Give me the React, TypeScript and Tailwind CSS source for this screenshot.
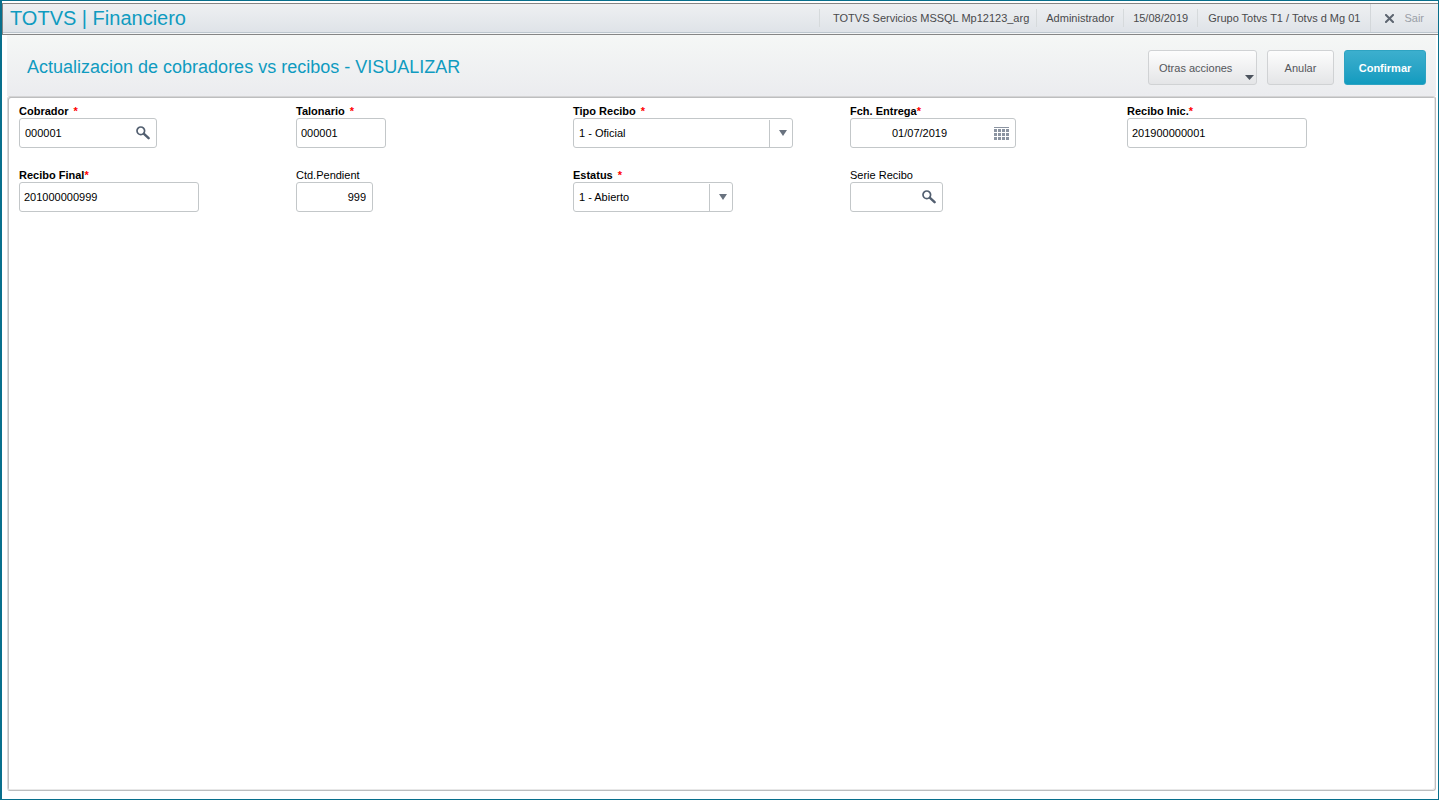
import React from "react"

type FieldProps = {
  id: string
  label: string
  required?: boolean
  // some labels carry the mark right after the text
  tight?: boolean
  children: React.ReactNode
}

const Field = ({ id, label, required, tight, children }: FieldProps) => {
  return (
    <div className="flex flex-col items-start">
      <label
        htmlFor={id}
        className={`block h-[14px] leading-[14px] ${required ? "font-bold" : ""}`}
      >
        {label}
        {required && (
          <span className={`text-[#ff0000] ${tight ? "" : "ml-[5px]"}`}>*</span>
        )}
      </label>
      {children}
    </div>
  )
}

const box =
  "flex h-[30px] max-w-full items-center rounded-[3px] border border-[#c3c7c9] bg-white"

type TextFieldProps = Omit<FieldProps, "children"> & {
  value: string
  width: string
  inputClass?: string
  action?: React.ReactNode
}

const TextField = ({
  value,
  width,
  inputClass = "px-1",
  action,
  ...field
}: TextFieldProps) => {
  return (
    <Field {...field}>
      <div className={`${box} ${width}`}>
        <input
          id={field.id}
          type="text"
          defaultValue={value}
          className={`h-full min-w-0 flex-1 bg-transparent outline-none ${inputClass}`}
        />
        {action}
      </div>
    </Field>
  )
}

type SelectFieldProps = Omit<FieldProps, "children"> & {
  value: string
  width: string
}

const SelectField = ({ value, width, ...field }: SelectFieldProps) => {
  return (
    <Field {...field}>
      <div className={`${box} relative ${width}`}>
        <select
          id={field.id}
          defaultValue={value}
          className="h-full w-full appearance-none bg-transparent pr-6 pl-[5px] outline-none"
        >
          <option>{value}</option>
        </select>
        <span className="pointer-events-none absolute inset-y-0 right-0 flex w-[23px] items-center justify-center pr-px">
          <span className="absolute top-px bottom-0 left-0 w-px bg-[#c3c7c9]" />
          <svg width="8" height="6" viewBox="0 0 8 6" className="ml-[5px]">
            <path d="M0 0h8L4 6z" fill="#69727f" />
          </svg>
        </span>
      </div>
    </Field>
  )
}

const SearchButton = ({ label }: { label: string }) => {
  return (
    <button type="button" aria-label={label} className="mr-[6px] shrink-0">
      <svg width="14" height="14" viewBox="0 0 14 14" fill="none">
        <circle cx="4.800" cy="4.800" r="3.800" stroke="#525f70" strokeWidth="1.700" />
        <path
          d="M8 7.800l4.600 4.400"
          stroke="#525f70"
          strokeWidth="2.4"
          strokeLinecap="round"
        />
      </svg>
    </button>
  )
}

const CalendarButton = () => {
  return (
    <button type="button" aria-label="Calendario" className="mr-[6px] shrink-0">
      <svg width="15" height="13" viewBox="0 0 15 13" fill="#8b94a1">
        <rect width="15" height="1" />
        {[2, 6, 10].map((y) =>
          [0, 4, 8, 12].map((x) => (
            <rect key={`${x}-${y}`} x={x} y={y} width="3" height="3" />
          ))
        )}
      </svg>
    </button>
  )
}

const TopBar = () => {
  return (
    <header className="mt-[2px] flex h-8 items-stretch border border-r-0 border-[#858585] bg-[#f4f6f7] pb-px">
      <div className="flex flex-1 items-center justify-between border-b border-[#bcc6ce] bg-linear-to-b from-[#eef0f2] to-[#dfe3e8]">
        <p className="pl-[7px] text-[20px] leading-7 whitespace-nowrap text-[#0f9bc0]">
          TOTVS | Financiero
        </p>
        <div className="flex h-full items-center whitespace-nowrap text-[#4a4a4c]">
          <span className="flex h-[18px] items-center border-l border-[#d6dadc] pr-[7px] pl-[13px]">
            TOTVS Servicios MSSQL Mp12123_arg
          </span>
          <span className="flex h-[18px] items-center border-l border-[#d6dadc] px-[9px]">
            Administrador
          </span>
          <span className="flex h-[18px] items-center border-l border-[#d6dadc] px-[9px]">
            15/08/2019
          </span>
          <span className="flex h-[18px] items-center border-l border-[#d6dadc] px-[10px]">
            Grupo Totvs T1 / Totvs d Mg 01
          </span>
          <button
            type="button"
            className="flex h-full items-center gap-[10px] border-l border-[#d3d7da] px-[14px] text-[#9a9fa7]"
          >
            <svg width="9" height="9" viewBox="0 0 9 9" aria-hidden="true">
              <path
                d="M1 1l7 7M8 1L1 8"
                stroke="#5d6570"
                strokeWidth="2"
                strokeLinecap="square"
              />
            </svg>
            Sair
          </button>
        </div>
      </div>
    </header>
  )
}

const lightButton =
  "h-[35px] rounded-[3px] border border-[#d0d2d4] bg-linear-to-b from-[#fdfdfd] to-[#e4e5e7] pt-[2px] text-[#54565b]"

const TitleBar = () => {
  return (
    <div className="flex h-[61px] items-center justify-between bg-linear-to-b from-[#f5f7f6] to-[#ebecef] pt-1 pr-[10px] pl-5">
      <h1 className="text-[18px] leading-[25px] text-[#0f9bc0]">
        Actualizacion de cobradores vs recibos - VISUALIZAR
      </h1>
      <div className="flex gap-[10px]">
        <button
          type="button"
          className={`${lightButton} relative w-[109px] pl-[10px] text-left`}
        >
          Otras acciones
          <svg
            width="9"
            height="5"
            viewBox="0 0 9 5"
            className="absolute right-[2px] bottom-1"
          >
            <path d="M0 0h9L4.500 5z" fill="#4c535d" />
          </svg>
        </button>
        <button type="button" className={`${lightButton} w-[67px]`}>
          Anular
        </button>
        <button
          type="button"
          className="h-[35px] w-[82px] rounded-[3px] border border-[#2ea3c2] bg-linear-to-b from-[#3cafce] to-[#109bbf] pt-[2px] font-bold text-white"
        >
          Confirmar
        </button>
      </div>
    </div>
  )
}

const App = () => {
  return (
    <div className="flex min-h-screen flex-col border border-l-2 border-[#086f8c] bg-white font-['Liberation_Sans',Arial,sans-serif] text-[11px] text-black">
      <TopBar />
      <main className="mr-[2px] mb-2 ml-[5px] flex flex-1 flex-col">
        <TitleBar />
        <form className="grid flex-1 grid-cols-5 content-start gap-y-5 rounded-[3px] border border-t-[#d4d4d5] border-r-[#bdbebf] border-b-[#bdbebf] border-l-[#d9dadb] pt-[7px] pr-[31px] pl-[11px] shadow-[inset_1px_1px_0_#bdbebf,inset_-1px_-1px_0_#e8e8e8]">
          <TextField
            id="cobrador"
            label="Cobrador"
            required
            value="000001"
            width="w-[138px]"
            inputClass="px-[5px]"
            action={<SearchButton label="Buscar cobrador" />}
          />
          <TextField
            id="talonario"
            label="Talonario"
            required
            value="000001"
            width="w-[90px]"
          />
          <SelectField
            id="tipo"
            label="Tipo Recibo"
            required
            value="1 - Oficial"
            width="w-[220px]"
          />
          <TextField
            id="entrega"
            label="Fch. Entrega"
            required
            tight
            value="01/07/2019"
            width="w-[166px]"
            inputClass="pr-[6px] text-center"
            action={<CalendarButton />}
          />
          <TextField
            id="recibo-inicial"
            label="Recibo Inic."
            required
            tight
            value="201900000001"
            width="w-[180px]"
          />
          <TextField
            id="recibo-final"
            label="Recibo Final"
            required
            tight
            value="201000000999"
            width="w-[180px]"
          />
          <TextField
            id="pendientes"
            label="Ctd.Pendient"
            value="999"
            width="w-[77px]"
            inputClass="px-[6px] text-right"
          />
          <SelectField
            id="estatus"
            label="Estatus"
            required
            value="1 - Abierto"
            width="w-[160px]"
          />
          <TextField
            id="serie"
            label="Serie Recibo"
            value=""
            width="w-[93px]"
            inputClass="px-[5px]"
            action={<SearchButton label="Buscar serie" />}
          />
        </form>
      </main>
    </div>
  )
}

export default App
